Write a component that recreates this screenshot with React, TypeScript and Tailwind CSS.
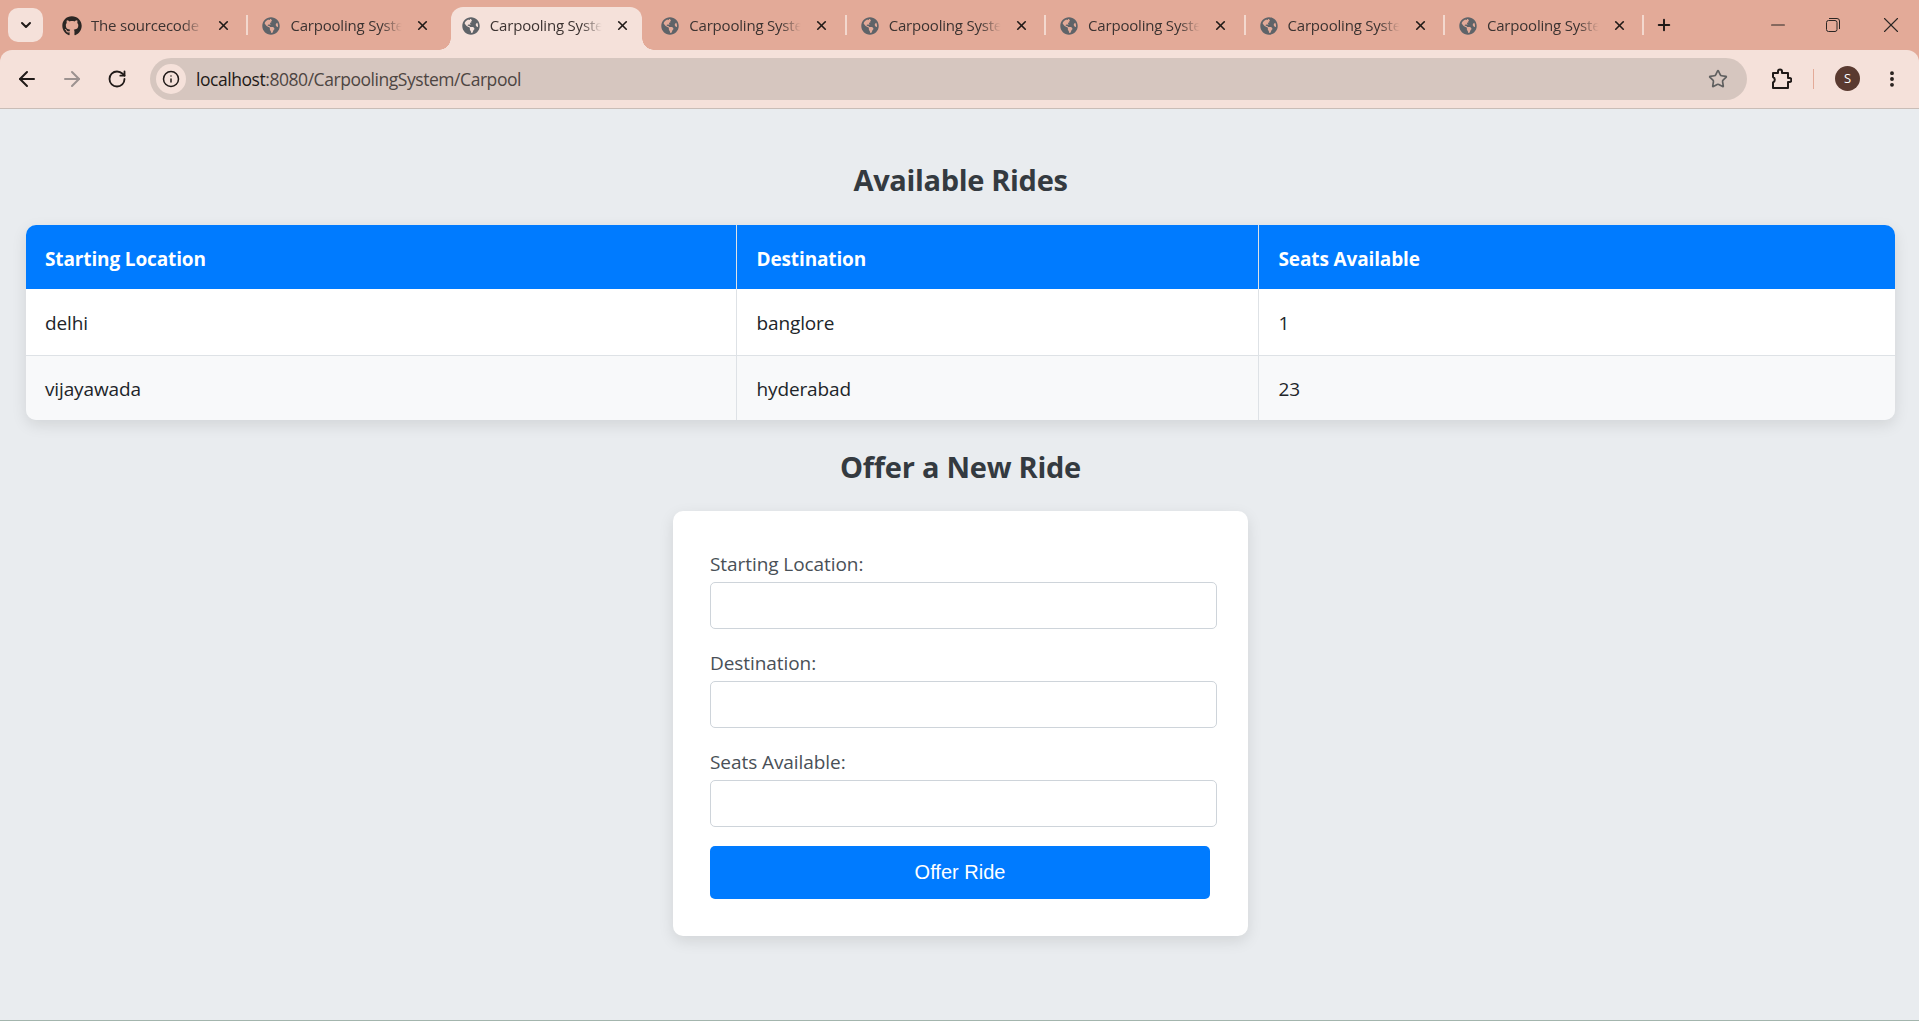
import { ArrowLeft, ArrowRight, ChevronDown, EllipsisVertical, Info, Minus, Plus, RotateCw, Star, X } from "lucide-react";
import { FaGithub, FaGlobeAmericas } from "react-icons/fa";

const tabs = [
  { title: "The sourcecode of", github: true },
  { title: "Carpooling System" },
  { title: "Carpooling System", active: true },
  { title: "Carpooling System" },
  { title: "Carpooling System" },
  { title: "Carpooling System" },
  { title: "Carpooling System" },
  { title: "Carpooling System" },
];

const uiFont = "font-['Open_Sans','Noto_Sans',sans-serif]";

function Tab({ title, github, active, showSep }: { title: string; github?: boolean; active?: boolean; showSep: boolean }) {
  return (
    <div className="relative flex h-[50px] w-[199.43px] shrink-0 items-center pt-px">
      {active && (
        <>
          <div className="absolute inset-x-[4px] bottom-0 top-[7px] rounded-t-[12px] bg-[#f5e1da]" />
          <div className="absolute bottom-0 left-[-8px] h-[12px] w-[12px] bg-[radial-gradient(circle_at_0_0,transparent_11.5px,#f5e1da_12px)]" />
          <div className="absolute bottom-0 right-[-8px] h-[12px] w-[12px] bg-[radial-gradient(circle_at_100%_0,transparent_11.5px,#f5e1da_12px)]" />
        </>
      )}
      <div className="relative flex w-full items-center pl-[14px]">
        {github ? <FaGithub className="h-[20px] w-[20px] text-[#2b2624]" /> : <FaGlobeAmericas className="mx-px h-[18px] w-[18px] text-[#5f6368]" />}
        <span className="ml-[9px] w-[114px] overflow-hidden whitespace-nowrap pb-px text-[15px] tracking-[-0.2px] text-[#3c3331] [mask-image:linear-gradient(to_right,black_80%,transparent_98%)]">
          {title}
        </span>
        <X className="ml-[11px] h-[15px] w-[15px] text-[#201a18]" strokeWidth={2.6} />
      </div>
      {showSep && <div className="absolute right-[-1px] top-[15px] h-[20px] w-[2px] bg-[#f3d8ce]" />}
    </div>
  );
}

function PuzzleIcon() {
  return (
    <svg width="22" height="22" viewBox="0 0 22 22" fill="none" stroke="#201a18" strokeWidth="2" strokeLinejoin="round">
      <path d="M3 5h5V3.6a2 2 0 0 1 4 0V5h6v5h1.4a2 2 0 0 1 0 4H18v6H3v-5.5a3 3 0 0 0 0-5.5z" />
    </svg>
  );
}

function RestoreIcon() {
  return (
    <svg width="14" height="14" viewBox="0 0 14 14" fill="none" stroke="#2b2624" strokeWidth="1">
      <rect x="0.5" y="2.5" width="10.5" height="11" rx="2" />
      <path d="M3 0.5h8a2.5 2.5 0 0 1 2.5 2.5v8" />
    </svg>
  );
}

function BrowserChrome() {
  return (
    <div className={`${uiFont} bg-[#e3aa98]`}>
      <div className="flex h-[50px] items-start pl-2">
        <div className="mt-2 flex h-[34px] w-[35px] items-center justify-center rounded-[10px] bg-[#f5e1da]">
          <ChevronDown className="h-[16px] w-[16px] text-[#201a18]" strokeWidth={3} />
        </div>
        <div className="ml-[5px] flex">
          {tabs.map((t, i) => (
            <Tab key={i} title={t.title} github={t.github} active={t.active} showSep={i !== 1 && i !== 2} />
          ))}
        </div>
        <div className="ml-[3px] flex h-[50px] w-[36px] items-center justify-center">
          <Plus className="h-[18px] w-[18px] text-[#201a18]" strokeWidth={2.6} />
        </div>
        <div className="ml-auto flex h-[50px]">
          <div className="flex w-[50px] items-center justify-center"><Minus className="h-[22px] w-[22px] text-[#2b2624]" strokeWidth={1.1} /></div>
          <div className="flex w-[60px] items-center justify-center"><RestoreIcon /></div>
          <div className="flex w-[56px] items-center justify-center"><X className="h-[26px] w-[26px] text-[#2b2624]" strokeWidth={1} /></div>
        </div>
      </div>
      <div className="flex h-[59px] items-center rounded-t-[12px] border-b border-[#c9bdb7] bg-[#f5e1da] pb-px">
        <div className="flex w-[150px] items-center">
          <ArrowLeft className="ml-[15px] h-[24px] w-[24px] text-[#201a18]" strokeWidth={2} />
          <ArrowRight className="ml-[21px] h-[24px] w-[24px] text-[#9c9290]" strokeWidth={2} />
          <RotateCw className="ml-[23px] h-[20px] w-[20px] text-[#201a18]" strokeWidth={2.2} />
        </div>
        <div className="flex h-[42px] w-[1597px] items-center rounded-full bg-[#d6c6bf] pl-[6px] pr-[19px]">
          <div className="flex h-[30px] w-[30px] items-center justify-center rounded-full bg-[#f5e1da]">
            <Info className="h-[18px] w-[18px] text-[#201a18]" strokeWidth={2} />
          </div>
          <span className="ml-[10px] pt-[2px] text-[17.5px] tracking-[-0.45px] text-[#4d4542]">
            <span className="text-[#1f1a18]">localhost</span>:8080/CarpoolingSystem/Carpool
          </span>
          <Star className="ml-auto h-[20px] w-[20px] text-[#5f5f5f]" strokeWidth={2} />
        </div>
        <div className="ml-[23px]"><PuzzleIcon /></div>
        <div className="ml-[21px] h-[20px] w-px bg-[#e3aa98]" />
        <div className="ml-[21px] flex h-[25px] w-[25px] items-center justify-center rounded-full bg-[#5a3a30] text-[13px] text-white">S</div>
        <EllipsisVertical className="ml-[22px] h-[20px] w-[20px] text-[#201a18]" strokeWidth={2.6} />
      </div>
    </div>
  );
}

function Field({ label }: { label: string }) {
  return (
    <div>
      <label className="mb-[4px] block text-[19px] leading-[28px] tracking-[-0.07px] text-[#495057]">{label}</label>
      <input type="text" className="block h-[47px] w-[507px] rounded-[5px] border border-[#ced4da] bg-white" />
    </div>
  );
}

export default function App() {
  const rows = [
    ["delhi", "banglore", "1"],
    ["vijayawada", "hyderabad", "23"],
  ];

  return (
    <div className="flex h-[1021px] flex-col overflow-hidden bg-[#e9ecef]">
      <BrowserChrome />
      <main className={`${uiFont} flex flex-1 flex-col border-b border-[#a3b5ad] pl-[2px] pt-[53px]`}>
        <h2 className="mb-[27px] text-center text-[29px] font-bold leading-[36px] tracking-[-0.33px] text-[#343a40]">Available Rides</h2>
        <div className="ml-[24px] mr-[24px] overflow-hidden rounded-[10px] shadow-[0_5px_15px_rgba(0,0,0,0.1)]">
          <table className="w-full table-fixed border-collapse text-[19px] tracking-[-0.13px] text-[#212529]">
            <thead>
              <tr className="h-[64px] bg-[#007bff] text-white">
                <th className="w-[710px] border-r border-[#dee2e6] pl-[19px] pt-[4px] text-left font-bold">Starting Location</th>
                <th className="w-[522px] border-r border-[#dee2e6] pl-[20px] pt-[4px] text-left font-bold">Destination</th>
                <th className="pl-[20px] pt-[4px] text-left font-bold">Seats Available</th>
              </tr>
            </thead>
            <tbody>
              {rows.map((r, i) => (
                <tr key={i} className={i === 0 ? "h-[66px] border-b border-[#dee2e6] bg-white" : "h-[65px] bg-[#f8f9fa]"}>
                  {r.map((c, j) => (
                    <td key={j} className={`${j < 2 ? "border-r border-[#dee2e6]" : ""} ${j === 0 ? "pl-[19px]" : "pl-[20px]"} pt-[3px]`}>{c}</td>
                  ))}
                </tr>
              ))}
            </tbody>
          </table>
        </div>
        <h2 className="mb-[26px] mt-[29px] text-center text-[29px] font-bold leading-[36px] tracking-[-0.25px] text-[#343a40]">Offer a New Ride</h2>
        <form className="mx-auto h-[425px] w-[575px] rounded-[10px] bg-white px-[37px] pt-[39px] shadow-[0_5px_15px_rgba(0,0,0,0.1)]">
          <div className="flex flex-col gap-5">
            <Field label="Starting Location:" />
            <Field label="Destination:" />
            <Field label="Seats Available:" />
          </div>
          <button type="button" className="mt-[19px] h-[53px] w-[500px] rounded-[5px] bg-[#007bff] pb-[2px] font-['Liberation_Sans',Arial,sans-serif] text-[20px] text-white">
            Offer Ride
          </button>
        </form>
      </main>
    </div>
  );
}
